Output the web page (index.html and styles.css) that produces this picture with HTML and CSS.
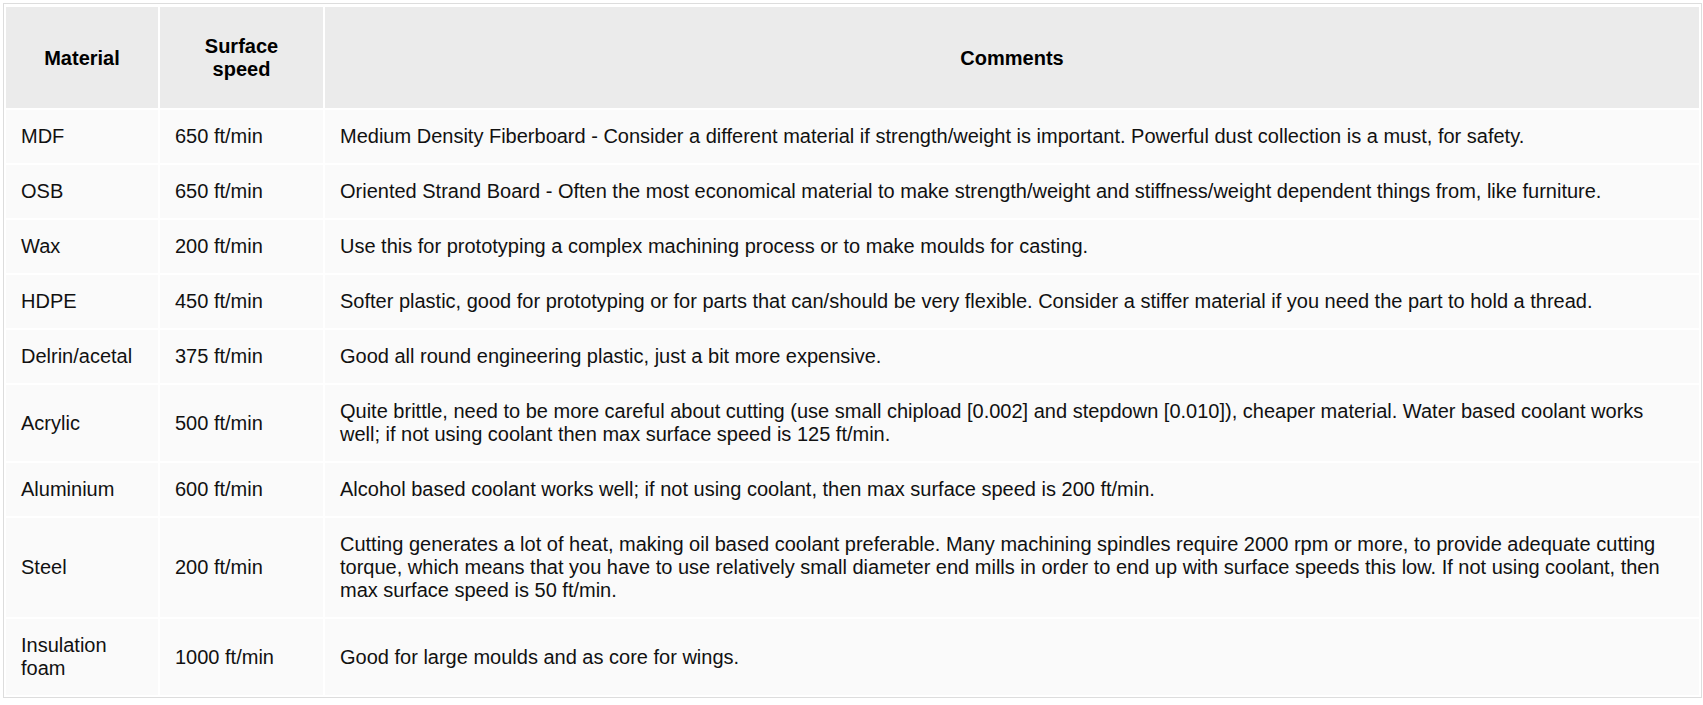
FILE: index.html
```html
<!DOCTYPE html>
<html>
<head>
<meta charset="utf-8">
<link rel="stylesheet" href="styles.css">
</head>
<body>
<div class="frame">
<table class="speeds">
<thead>
<tr>
<th class="col-material">Material</th>
<th class="col-speed">Surface<br>speed</th>
<th>Comments</th>
</tr>
</thead>
<tbody>
<tr><td>MDF</td><td>650 ft/min</td><td>Medium Density Fiberboard - Consider a different material if strength/weight is important. Powerful dust collection is a must, for safety.</td></tr>
<tr><td>OSB</td><td>650 ft/min</td><td>Oriented Strand Board - Often the most economical material to make strength/weight and stiffness/weight dependent things from, like furniture.</td></tr>
<tr><td>Wax</td><td>200 ft/min</td><td>Use this for prototyping a complex machining process or to make moulds for casting.</td></tr>
<tr><td>HDPE</td><td>450 ft/min</td><td>Softer plastic, good for prototyping or for parts that can/should be very flexible. Consider a stiffer material if you need the part to hold a thread.</td></tr>
<tr><td>Delrin/acetal</td><td>375 ft/min</td><td>Good all round engineering plastic, just a bit more expensive.</td></tr>
<tr><td>Acrylic</td><td>500 ft/min</td><td>Quite brittle, need to be more careful about cutting (use small chipload [0.002] and stepdown [0.010]), cheaper material. Water based coolant works well; if not using coolant then max surface speed is 125 ft/min.</td></tr>
<tr><td>Aluminium</td><td>600 ft/min</td><td>Alcohol based coolant works well; if not using coolant, then max surface speed is 200 ft/min.</td></tr>
<tr><td>Steel</td><td>200 ft/min</td><td>Cutting generates a lot of heat, making oil based coolant preferable. Many machining spindles require 2000 rpm or more, to provide adequate cutting torque, which means that you have to use relatively small diameter end mills in order to end up with surface speeds this low. If not using coolant, then max surface speed is 50 ft/min.</td></tr>
<tr><td>Insulation foam</td><td>1000 ft/min</td><td>Good for large moulds and as core for wings.</td></tr>
</tbody>
</table>
</div>
</body>
</html>
```
FILE: styles.css
```css
html, body {
  margin: 0;
  padding: 0;
  background: #ffffff;
}

body {
  font-family: "Liberation Sans", Arial, sans-serif;
  font-size: 20px;
  color: #111111;
}

.frame {
  margin: 3px 1px 0 3px;
  padding-top: 1px;
  border: 1px solid #dddddd;
}

.speeds {
  width: 100%;
  border-collapse: separate;
  border-spacing: 2px;
}

.speeds th {
  background: #ebebeb;
  color: #000000;
  font-weight: bold;
  text-align: center;
  vertical-align: middle;
  line-height: 23px;
  padding: 28px 15px 27px;
}

.speeds td {
  background: #fafafa;
  text-align: left;
  vertical-align: middle;
  line-height: 23px;
  padding: 15px 15px;
}

.col-material {
  width: 122px;
}

.col-speed {
  width: 133px;
}
```
